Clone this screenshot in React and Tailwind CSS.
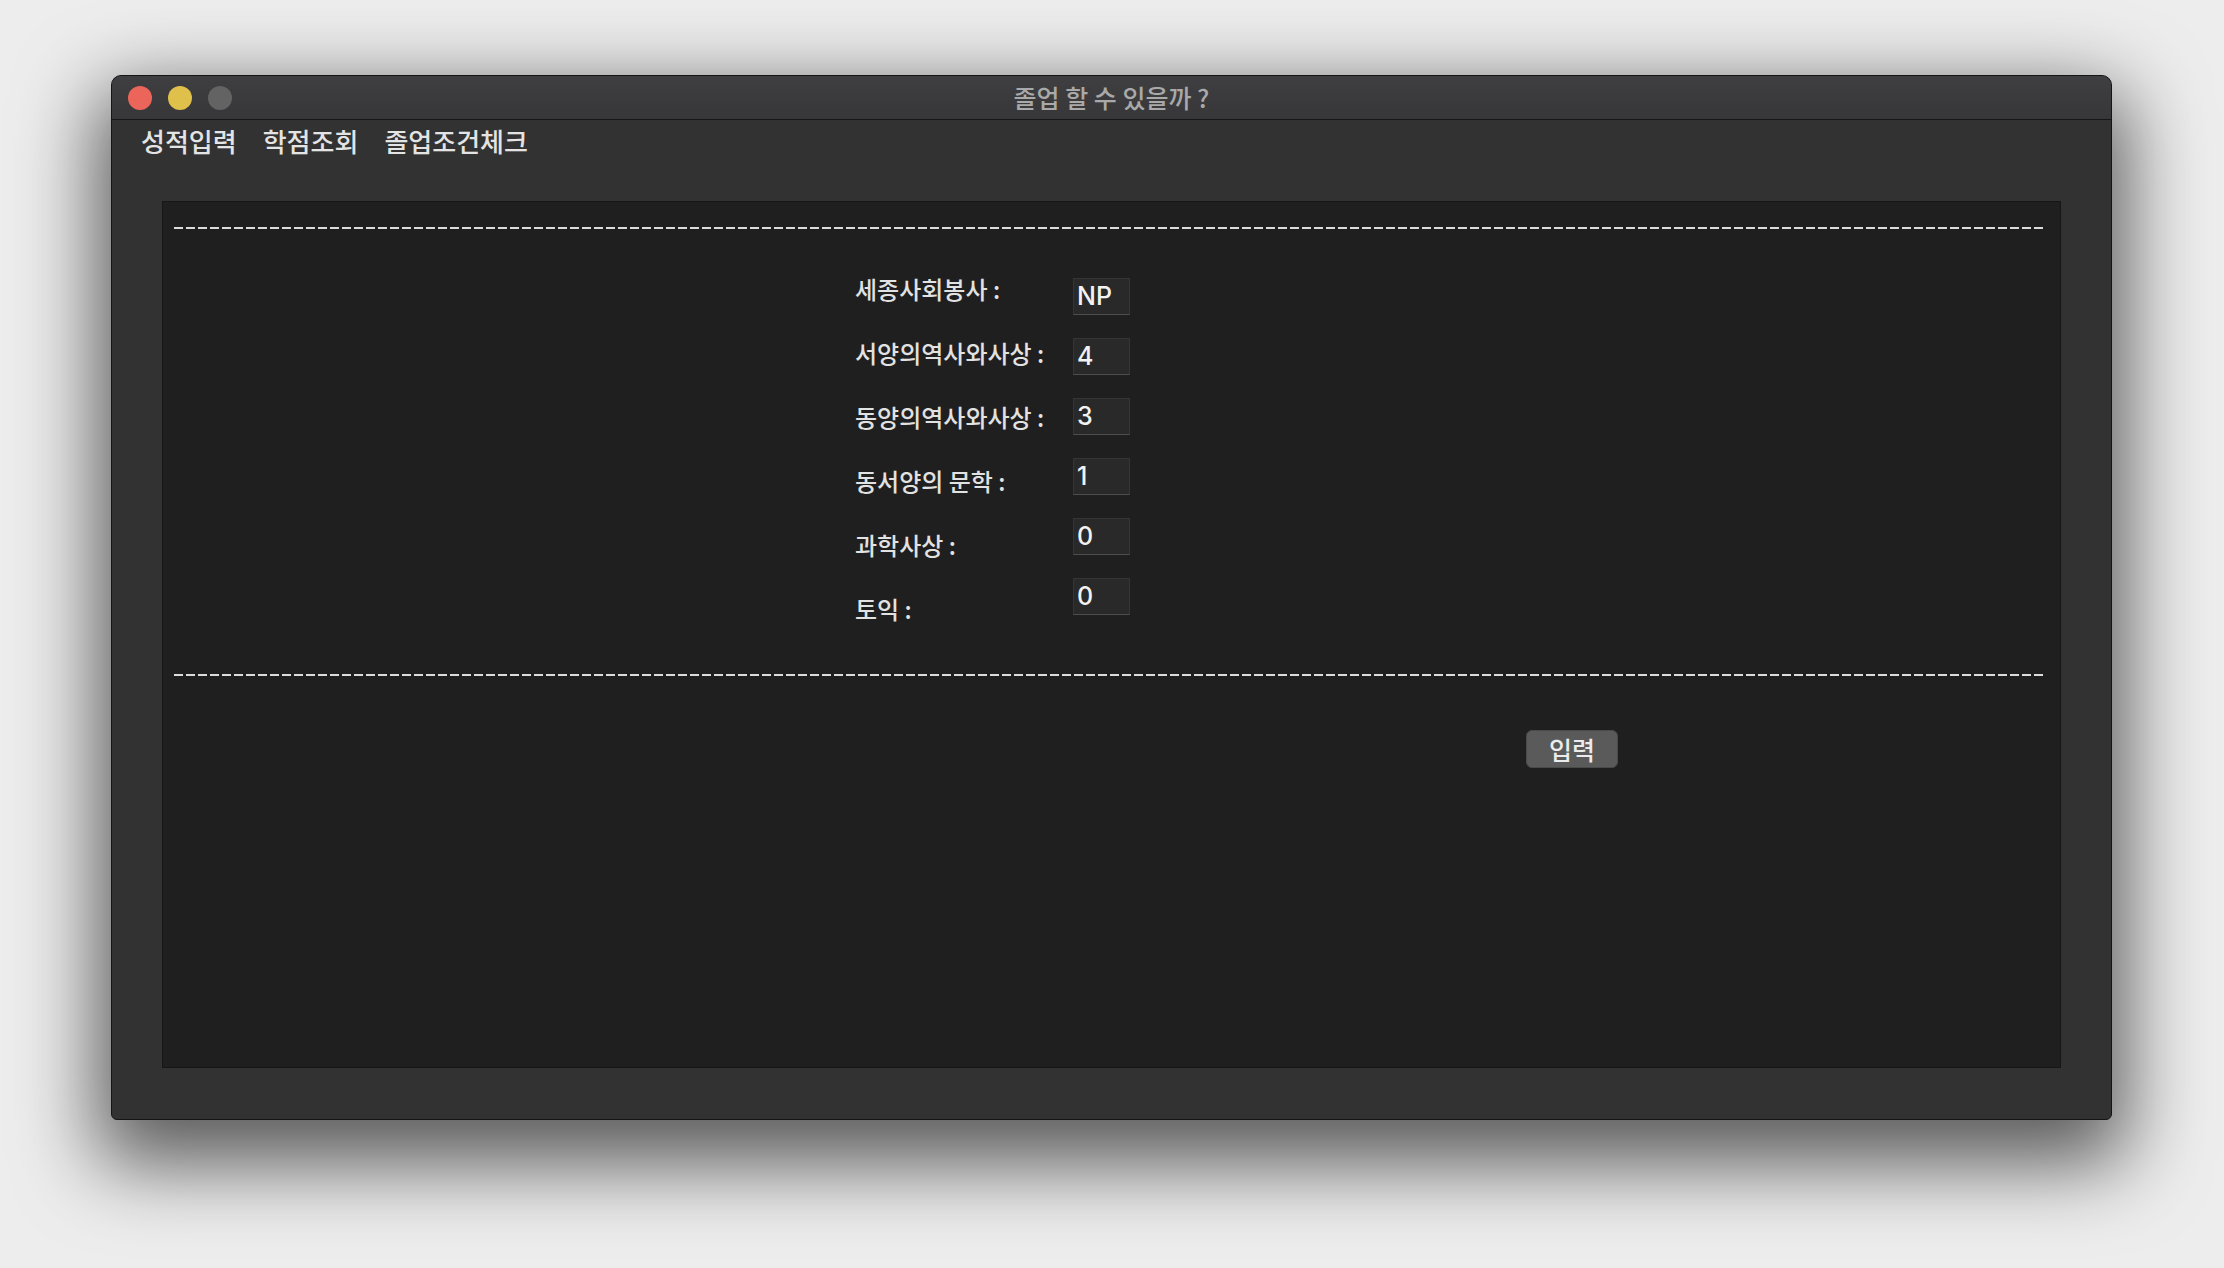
import React from "react";

const KR = { fontFamily: '"Noto Sans CJK KR", "Noto Sans", sans-serif' };
const NUM = { fontFamily: 'Inter, "Noto Sans CJK KR", sans-serif' };

const rows = [
  ["세종사회봉사 :", "NP"],
  ["서양의역사와사상 :", "4"],
  ["동양의역사와사상 :", "3"],
  ["동서양의 문학 :", "1"],
  ["과학사상 :", "0"],
  ["토익 :", "0"],
];

function Dashes() {
  return (
    <div className="ml-[11px] w-[1872px] h-[2px] bg-[repeating-linear-gradient(90deg,#dcdcdc_0px,#dcdcdc_9px,transparent_9px,transparent_12px)]" />
  );
}

export default function App() {
  return (
    <div className="w-[2224px] h-[1268px] bg-[#ededed] pt-[75px] pl-[111px] overflow-hidden" style={KR}>
      <div className="w-[2001px] h-[1045px] flex flex-col bg-[#323232] border border-[#151515] rounded-t-[10px] rounded-b-[6px] shadow-[0_30px_80px_14px_rgba(0,0,0,0.62)] overflow-hidden">
        {/* title bar */}
        <div className="h-[44px] shrink-0 grid grid-cols-[1fr_auto_1fr] items-center bg-[linear-gradient(#3f3f41,#373739)] border-b border-[#161616]">
          <div className="flex items-center gap-[16px] pl-[16px]">
            <div className="w-[24px] h-[24px] rounded-full bg-[#ec655a]" />
            <div className="w-[24px] h-[24px] rounded-full bg-[#dfc04b]" />
            <div className="w-[24px] h-[24px] rounded-full bg-[#636363]" />
          </div>
          <div className="text-[25px] leading-none text-[#a9a9a9] font-medium">졸업 할 수 있을까 ?</div>
          <div />
        </div>
        {/* menu */}
        <div className="h-[41px] shrink-0 flex items-center gap-[26px] pl-[29px] text-[26px] leading-none text-[#e4e4e4] font-medium">
          <span>성적입력</span>
          <span>학점조회</span>
          <span>졸업조건체크</span>
        </div>
        {/* body */}
        <div className="flex-1 px-[50px] pt-[40px] pb-[51px] flex">
          <div className="flex-1 bg-[#1f1f1f] border border-[#161616] flex flex-col">
            <div className="mt-[25px]">
              <Dashes />
            </div>
            <div className="flex ml-[692px]">
              <div className="w-[218px] pt-[28px] flex flex-col">
                {rows.map(([label]) => (
                  <div key={label} className="h-[64px] flex items-center text-[24px] leading-none text-[#e2e2e2] font-medium">
                    {label}
                  </div>
                ))}
              </div>
              <div className="pt-[49px] flex flex-col gap-[23px]">
                {rows.map(([label, v]) => (
                  <div
                    key={label}
                    className="w-[57px] h-[37px] bg-[#292929] border border-[#353535] border-b-[#4d4d4d] flex items-center pl-[3px] text-[25px] leading-none text-[#f2f2f2] font-medium"
                    style={NUM}
                  >
                    {v}
                  </div>
                ))}
              </div>
            </div>
            <div className="mt-[33px]">
              <Dashes />
            </div>
            <div className="mt-[54px] ml-[1363px]">
              <div className="w-[92px] h-[38px] rounded-[6px] bg-[#5a5a5a] border border-[#4a4a4a] flex items-center justify-center text-[25px] leading-none text-[#ececec] font-medium">
                입력
              </div>
            </div>
          </div>
        </div>
      </div>
    </div>
  );
}
